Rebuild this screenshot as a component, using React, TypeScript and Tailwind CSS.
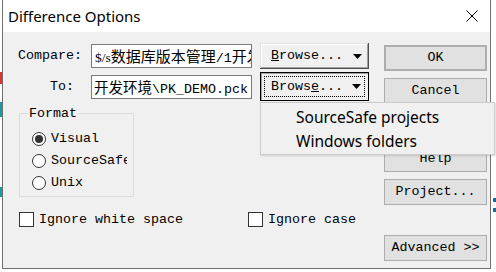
import React from "react";

const mono = "font-['Liberation_Mono','Noto_Sans_CJK_SC',monospace] text-[13.33px] leading-none text-black";
const sans = "font-['Noto_Sans','Noto_Sans_CJK_SC',sans-serif] text-black";
const btn = "flex h-[26px] w-full items-center justify-center border border-[#adadad] bg-[#e1e1e1]";
const field = "h-[24px] w-[161px] shrink-0 overflow-hidden whitespace-nowrap border border-[#7a7a7a] bg-white leading-[22px]";

function Arrow() {
  return (
    <svg width="9" height="5" viewBox="0 0 9 5">
      <path d="M0 0h9L4.5 5z" fill="#000" />
    </svg>
  );
}

function Radio({ label, checked }: { label: string; checked?: boolean }) {
  return (
    <div className="flex h-[22px] w-[107px] items-center gap-[5px] overflow-hidden pl-[12px]">
      <span className="flex h-[14px] w-[14px] shrink-0 items-center justify-center rounded-full border border-[#333333] bg-white">
        {checked && <span className="h-[8px] w-[8px] rounded-full bg-[#333333]" />}
      </span>
      <span className={`${mono} whitespace-nowrap`}>{label}</span>
    </div>
  );
}

function Check({ label }: { label: string }) {
  return (
    <div className="flex items-center gap-[5px]">
      <span className="h-[15px] w-[15px] shrink-0 border border-[#333333] bg-white" />
      <span className={`${mono} whitespace-nowrap`}>{label}</span>
    </div>
  );
}

export default function App() {
  return (
    <div className="relative h-[272px] w-[496px] overflow-hidden bg-white">
      {/* bits of the window behind */}
      <div className="absolute left-0 top-[72px] h-[12px] w-[2px] bg-[#e03030]" />
      <div className="absolute left-0 top-[102px] h-[15px] w-[2px] bg-[#1a9aa0]" />
      <div className="absolute left-0 top-[187px] h-[10px] w-[2px] bg-[#1a9aa0]" />
      <div className="absolute right-0 top-[198px] h-[4px] w-[3px] bg-[#1a6aa0]" />
      <div className="absolute right-0 top-[208px] h-[4px] w-[3px] bg-[#1a6aa0]" />

      <div className="ml-[2px] w-[489px] border-x border-b border-[#707070]">
        {/* title bar */}
        <div className="flex h-[32px] items-center justify-between bg-white pl-[5px] pr-[12px]">
          <span className={`${sans} text-[15px] leading-none`}>Difference Options</span>
          <svg width="12" height="12" viewBox="0 0 12 12">
            <path d="M0.5 0.5L11.5 11.5M11.5 0.5L0.5 11.5" stroke="#000" strokeWidth="1" />
          </svg>
        </div>

        {/* body */}
        <div className="flex h-[236px] bg-[#f0f0f0]">
          <div className="flex flex-1 flex-col pl-[15px]">
            <div className="mt-[11px] flex h-[26px] items-center">
              <span className={`${mono} w-[73px] shrink-0`}>Compare:</span>
              <div className={`${field} pl-[3px]`}>
                <span className="font-['Liberation_Serif',serif] text-[13.5px]">$/s</span>
                <span className="font-['Noto_Sans_CJK_SC',sans-serif] text-[15px]">数据库版本管理</span>
                <span className="font-['Liberation_Mono',monospace] text-[13.33px]">/1</span>
                <span className="font-['Noto_Sans_CJK_SC',sans-serif] text-[15px]">开发</span>
              </div>
              <div className="ml-[8px] flex h-[26px] w-[109px] shrink-0 items-center justify-between bg-[#f0f0f0] pl-[11px] pr-[7px] shadow-[inset_-1px_-1px_#505050,inset_1px_1px_#e3e3e3,inset_-2px_-2px_#a0a0a0,inset_2px_2px_#ffffff]">
                <span className={mono}>
                  <u>B</u>rowse...
                </span>
                <Arrow />
              </div>
            </div>

            <div className="mt-[3px] flex h-[29px] items-center">
              <span className={`${mono} w-[73px] shrink-0 pl-[32px]`}>To:</span>
              <div className={`${field} pl-[2px]`}>
                <span className="font-['Noto_Sans_CJK_SC',sans-serif] text-[14.5px]">开发环境</span>
                <span className="font-['Liberation_Mono',monospace] text-[13.33px]">\PK_DEMO.pck</span>
              </div>
              <div className="ml-[8px] flex h-[29px] w-[109px] shrink-0 border border-black bg-[#f0f0f0] p-[3px] shadow-[inset_1px_1px_#a0a0a0]">
                <div className="flex flex-1 items-center justify-between border border-dotted border-black pl-[6px] pr-[3px]">
                  <span className={mono}>
                    Brows<u>e</u>...
                  </span>
                  <Arrow />
                </div>
              </div>
            </div>

            {/* format group */}
            <div className="relative ml-[1px] mt-[12px] h-[84px] w-[115px] border border-[#dcdcdc]">
              <span className={`${mono} absolute -top-[7px] left-[8px] bg-[#f0f0f0] px-px`}>Format</span>
              <div className="flex flex-col pt-[14px]">
                <Radio label="Visual" checked />
                <Radio label="SourceSafe" />
                <Radio label="Unix" />
              </div>
            </div>

            <div className="ml-[1px] mt-[15px] flex items-center">
              <div className="w-[229px]">
                <Check label="Ignore white space" />
              </div>
              <Check label="Ignore case" />
            </div>
          </div>

          {/* button column */}
          <div className="mr-[3px] flex w-[103px] flex-col pt-[13px]">
            <div className={`${btn} border-2 border-[#0078d7]`}>
              <span className={mono}>OK</span>
            </div>
            <div className={`${btn} mt-[7px]`}>
              <span className={mono}>Cancel</span>
            </div>
            {/* covered by the dropdown */}
            <div className={`${btn} mt-[8px]`} />
            <div className={`${btn} mt-[8px]`}>
              <span className={mono}>Help</span>
            </div>
            <div className={`${btn} mt-[7px]`}>
              <span className={mono}>Project...</span>
            </div>
            <div className={`${btn} mt-[30px]`}>
              <span className={mono}>Advanced &gt;&gt;</span>
            </div>
          </div>
        </div>
      </div>

      <div className="mt-[1px] whitespace-nowrap pl-[28px] font-['Noto_Sans_CJK_SC',sans-serif] text-[22px] leading-none text-[#e02020]">
        个分机目录日期传递期（结果说明）（）
      </div>

      {/* dropdown menu of the Browse button */}
      <div className="absolute left-[260px] top-[102px] flex h-[53px] w-[235px] flex-col border border-[#cccccc] bg-[#f0f0f0] pl-[35px] pt-[3px] shadow-[1px_1px_2px_rgba(0,0,0,0.15)]">
        <div className={`${sans} flex h-[24px] items-center text-[15.5px] leading-none`}>SourceSafe projects</div>
        <div className={`${sans} flex h-[24px] items-center text-[15.5px] leading-none`}>Windows folders</div>
      </div>
    </div>
  );
}
